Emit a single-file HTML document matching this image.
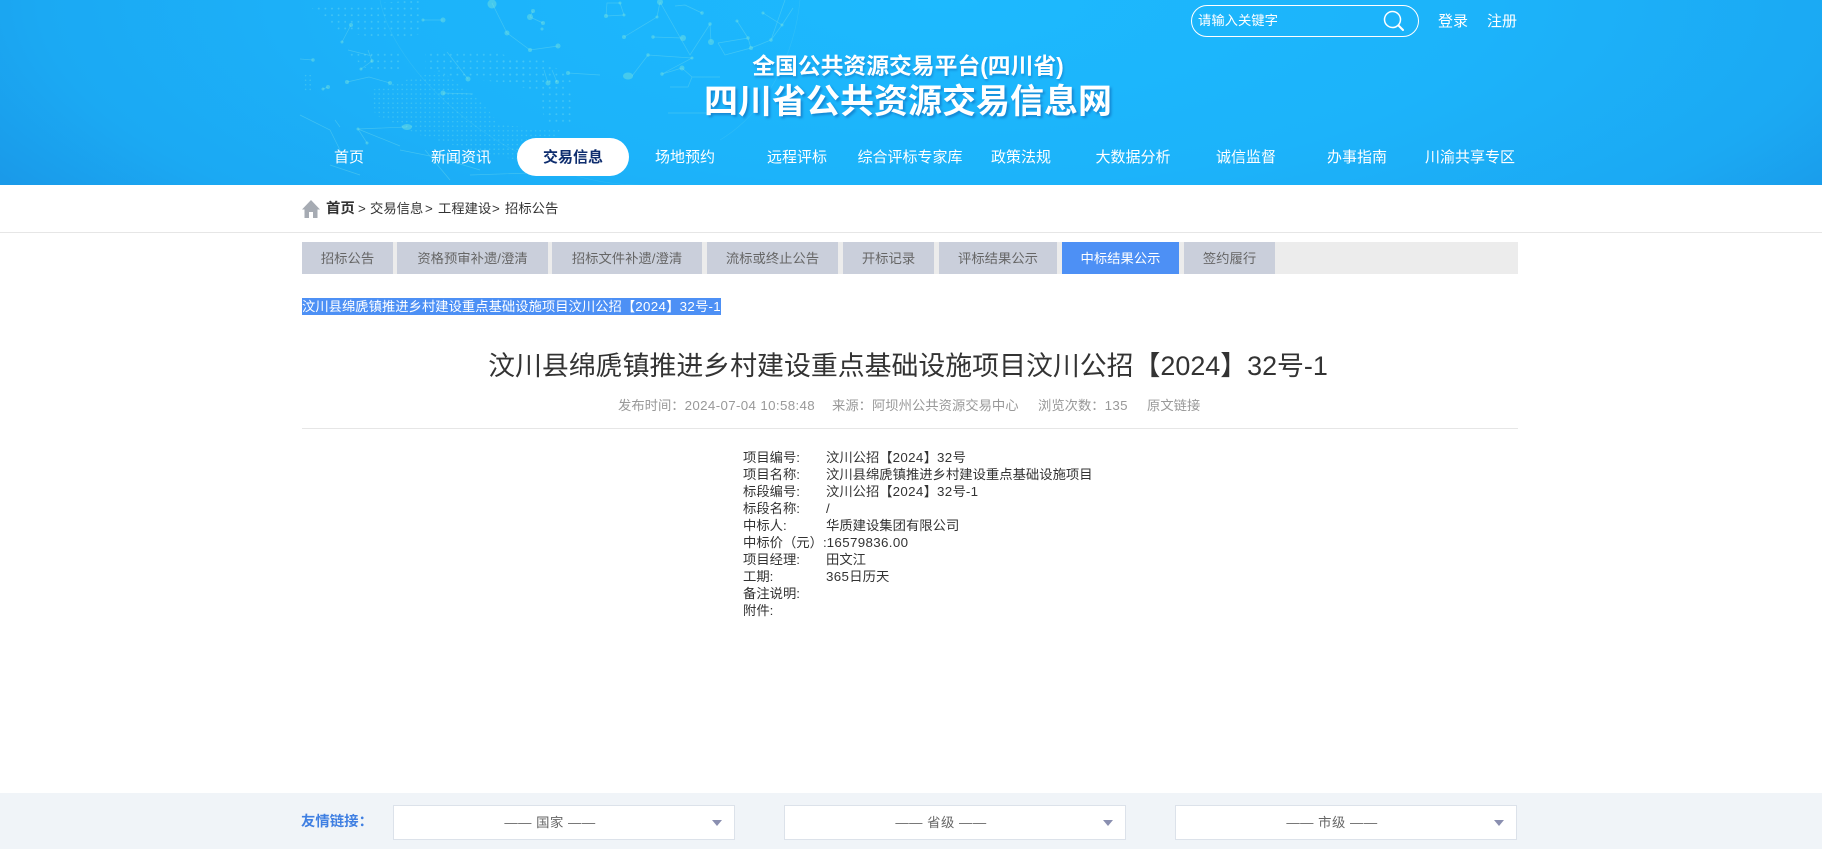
<!DOCTYPE html>
<html lang="zh-CN">
<head>
<meta charset="utf-8">
<title>四川省公共资源交易信息网</title>
<style>
*{margin:0;padding:0;box-sizing:border-box}
html,body{width:1822px;height:849px;overflow:hidden;background:#fff}
body{position:relative;font-family:"Liberation Sans","Noto Sans CJK SC",sans-serif;color:#333}
.a{position:absolute;white-space:nowrap}
.n{letter-spacing:.35px}
.hd{position:absolute;left:0;top:0;width:1822px;height:185px;overflow:hidden;
background:radial-gradient(ellipse 1500px 500px at 940px 0px,#1db9fe 0%,#1cb3fa 37%,#1ba9f3 60%,#1a9ae9 72%,#1a96e6 100%)}
.nav{position:absolute;top:139px;height:38px;line-height:38px;width:160px;text-align:center;font-size:15px;color:#fff}
.t1{left:600px;width:622px;text-align:center;color:#fff;font-weight:bold}
.tab{position:absolute;top:242px;height:32px;line-height:32px;padding-top:1px;background:#cacfdb;color:#666;font-size:13.33px;text-align:center}
.r{position:absolute;font-size:13.33px;line-height:17px;height:17px;color:#333;white-space:nowrap}
.bc{position:absolute;top:199px;height:20px;line-height:20px;font-size:13.33px;color:#333;white-space:nowrap}
.m{position:absolute;top:396px;height:20px;line-height:20px;font-size:13.33px;color:#999;white-space:nowrap}
.sel{position:absolute;top:805px;width:342px;height:35px;background:#fff;border:1px solid #dce2ea;text-align:center;font-size:13.33px;line-height:33px;color:#666;padding-right:28px;letter-spacing:.5px}
.sel i{position:absolute;right:12px;top:14px;width:0;height:0;border-left:5px solid transparent;border-right:5px solid transparent;border-top:6px solid #8a8fb0}
</style>
</head>
<body>
<div class="hd">
<svg class="a" style="left:0;top:0" width="1822" height="185" viewBox="0 0 1822 185">
<defs>
<pattern id="d7" width="6.6" height="6.6" patternUnits="userSpaceOnUse"><circle cx="2" cy="2" r="0.9" fill="#9cf0ea"/></pattern>
<pattern id="d5" width="4.6" height="4.6" patternUnits="userSpaceOnUse"><circle cx="2" cy="2" r="0.75" fill="#8fece6"/></pattern>
</defs>
<g opacity=".3">
<polygon fill="url(#d7)" points="312,8 420,0 420,34 395,40 340,32"/>
<polygon fill="url(#d7)" points="345,50 400,50 400,70 365,68"/>
<polygon fill="url(#d7)" points="425,50 490,50 525,62 525,85 480,80 425,72"/>
<polygon fill="url(#d7)" points="500,58 540,58 575,80 560,95 510,85"/>
<polygon fill="url(#d5)" points="372,90 440,70 480,100 500,125 560,130 540,165 470,150 420,135 375,115"/>
<polygon fill="url(#d7)" points="540,90 575,90 570,125 545,125"/>
<polygon fill="url(#d5)" points="302,75 312,75 312,92 302,92"/>
</g>
<g fill="none" stroke="#8fe8e6" stroke-width=".7" opacity=".32">
<path d="M492 3L507 33L530 50L558 46"/>
<path d="M530 17L543 23M533 11L530 17M423 20L443 20"/>
<path d="M351 25L342 42M300 59L313 60M372 61L361 69M368 50L372 61M348 50L372 56"/>
<path d="M347 82L369 77L390 83M328 87L323 89"/>
<path d="M407 127L358 129L367 143M340 127L335 120M358 129L400 146"/>
<path d="M447 52L468 79M443 93L473 94M568 73L600 75M632 76L648 55L692 58L662 74L682 68L692 77"/>
<path d="M544 70L548 83M552 70L557 82"/>
<path d="M660 2L657 17L624 37M606 16L624 15L620 3L607 3L606 16"/>
<path d="M653 37L683 38M660 2L690 55L710 24L711 42"/>
<path d="M675 6L685 5L702 13M718 43L725 55L751 48L771 40L782 25L763 13M718 43L748 38L751 48M737 21L748 38"/>
<path d="M670 87L688 87L692 77M692 77L720 77M668 113L720 113M793 8L782 25M785 0L771 40"/>
<path d="M300 115L330 130L345 160M400 150L440 158L480 170M330 165L360 175"/>
<path d="M380 0C395 80 520 185 640 185" stroke-width=".6" opacity=".5"/>
<path d="M800 0C795 50 770 110 720 140" stroke-width=".6" opacity=".5"/>
<path d="M470 175L560 172M425 150L450 180"/>
</g>
<g fill="#7fe8dc" opacity=".42">
<circle cx="492" cy="4" r="4.5"/><circle cx="507" cy="33" r="2.5"/><circle cx="530" cy="50" r="2"/><circle cx="558" cy="46" r="2.5"/>
<circle cx="530" cy="17" r="3"/><circle cx="533" cy="11" r="2"/><circle cx="543" cy="23" r="2"/><circle cx="542" cy="29" r="1.5"/>
<circle cx="443" cy="20" r="2.5"/><circle cx="423" cy="20" r="1.5"/><circle cx="351" cy="25" r="2"/><circle cx="342" cy="42" r="1.5"/>
<circle cx="313" cy="60" r="1.7"/><circle cx="372" cy="61" r="1.7"/><circle cx="361" cy="69" r="1.5"/><circle cx="347" cy="82" r="2"/><circle cx="390" cy="83" r="2"/>
<circle cx="328" cy="87" r="2"/><circle cx="323" cy="89" r="1.5"/><ellipse cx="407" cy="127" rx="5" ry="3"/><circle cx="358" cy="129" r="1.5"/><circle cx="367" cy="143" r="1.5"/>
<circle cx="468" cy="79" r="2.5"/><circle cx="443" cy="93" r="2.5"/><circle cx="568" cy="73" r="2"/><circle cx="548" cy="83" r="2.5"/><circle cx="557" cy="82" r="2"/>
<circle cx="660" cy="2" r="3"/><circle cx="657" cy="17" r="1.5"/><circle cx="624" cy="37" r="2"/><circle cx="606" cy="16" r="2"/><circle cx="624" cy="15" r="1.5"/><circle cx="620" cy="3" r="1.5"/>
<circle cx="683" cy="38" r="3"/><circle cx="653" cy="37" r="1.7"/><circle cx="710" cy="24" r="1.7"/><circle cx="711" cy="42" r="3"/>
<ellipse cx="628" cy="76" rx="5" ry="3.5"/><circle cx="648" cy="55" r="1.7"/><circle cx="662" cy="74" r="1.7"/><circle cx="682" cy="68" r="2.5"/><circle cx="692" cy="58" r="1.5"/>
<circle cx="751" cy="48" r="2"/><circle cx="771" cy="40" r="1.7"/><circle cx="763" cy="13" r="1.5"/><circle cx="737" cy="21" r="1.5"/><circle cx="748" cy="38" r="1.7"/><circle cx="702" cy="13" r="1.7"/><circle cx="782" cy="25" r="1.5"/>
</g>
</svg>
<div class="a t1" style="top:50px;height:32px;line-height:32px;font-size:22.8px;left:597px;text-shadow:1px 2px 2px rgba(15,110,190,.5)">全国公共资源交易平台(四川省)</div>
<div class="a t1" style="top:79px;height:46px;line-height:46px;font-size:34px;left:597px;text-shadow:2px 2px 2px rgba(15,100,180,.55)">四川省公共资源交易信息网</div>

<div class="a" style="left:1191px;top:5px;width:228px;height:32px;border:1px solid #fff;border-radius:16px"></div>
<div class="a" style="left:1198px;top:12px;height:18px;line-height:18px;font-size:13.33px;color:#fff">请输入关键字</div>
<svg class="a" style="left:1382px;top:9px" width="24" height="24" viewBox="0 0 24 24" fill="none" stroke="#fff"><circle cx="10.5" cy="10.5" r="8" stroke-width="1.5"/><path d="M16.5 16.5L21 21" stroke-width="2" stroke-linecap="round"/></svg>
<div class="a" style="left:1438px;top:11px;height:22px;line-height:22px;font-size:15px;color:#fff">登录</div>
<div class="a" style="left:1487px;top:11px;height:22px;line-height:22px;font-size:15px;color:#fff">注册</div>

<div class="a" style="left:517px;top:138px;width:112px;height:38px;border-radius:19px;background:#fff"></div>
<div class="nav" style="left:269px">首页</div>
<div class="nav" style="left:381px">新闻资讯</div>
<div class="nav" style="left:493px;color:#0e2d6e;font-weight:bold">交易信息</div>
<div class="nav" style="left:605px">场地预约</div>
<div class="nav" style="left:717px">远程评标</div>
<div class="nav" style="left:830px">综合评标专家库</div>
<div class="nav" style="left:941px">政策法规</div>
<div class="nav" style="left:1053px">大数据分析</div>
<div class="nav" style="left:1166px">诚信监督</div>
<div class="nav" style="left:1277px">办事指南</div>
<div class="nav" style="left:1390px">川渝共享专区</div>
</div>

<svg class="a" style="left:302px;top:200px" width="18" height="18" viewBox="0 0 18 18"><path d="M9 0L18 9.5H15.5V18H11V12H7V18H2.5V9.5H0Z" fill="#a6abb3"/></svg>
<div class="bc" style="left:326px;font-size:14.4px;font-weight:bold">首页</div>
<div class="bc" style="left:358px">&gt;</div>
<div class="bc" style="left:370px">交易信息</div>
<div class="bc" style="left:425px">&gt;</div>
<div class="bc" style="left:438px">工程建设</div>
<div class="bc" style="left:492px">&gt;</div>
<div class="bc" style="left:505px">招标公告</div>
<div class="a" style="left:0;top:232px;width:1822px;height:1px;background:#e6e6e6"></div>

<div class="a" style="left:302px;top:242px;width:1216px;height:32px;background:#ececec"></div>
<div class="tab" style="left:302px;width:91px">招标公告</div>
<div class="tab" style="left:397px;width:151px">资格预审补遗/澄清</div>
<div class="tab" style="left:552px;width:150px">招标文件补遗/澄清</div>
<div class="tab" style="left:707px;width:131px">流标或终止公告</div>
<div class="tab" style="left:843px;width:91px">开标记录</div>
<div class="tab" style="left:939px;width:118px">评标结果公示</div>
<div class="tab" style="left:1062px;width:117px;background:#4d90f5;color:#fff">中标结果公示</div>
<div class="tab" style="left:1184px;width:91px">签约履行</div>

<div class="a" style="left:302px;top:298px;width:419px;height:17px;line-height:17px;background:#4d90f5;color:#fff;font-size:13.33px">汶川县绵虒镇推进乡村建设重点基础设施项目汶川公招【<span class="n">2024</span>】<span class="n">32</span>号<span class="n">-1</span></div>

<div class="a" style="left:300px;top:346px;width:1216px;height:40px;line-height:40px;text-align:center;font-size:26.9px;color:#333">汶川县绵虒镇推进乡村建设重点基础设施项目汶川公招【2024】32号-1</div>

<div class="m" style="left:618px">发布时间：<span class="n">2024-07-04 10:58:48</span></div>
<div class="m" style="left:832px">来源：阿坝州公共资源交易中心</div>
<div class="m" style="left:1038px">浏览次数：<span class="n">135</span></div>
<div class="m" style="left:1147px">原文链接</div>
<div class="a" style="left:302px;top:428px;width:1216px;height:1px;background:#e6e6e6"></div>

<div class="r" style="left:743px;top:449px">项目编号:</div><div class="r" style="left:826px;top:449px">汶川公招【<span class="n">2024</span>】<span class="n">32</span>号</div>
<div class="r" style="left:743px;top:466px">项目名称:</div><div class="r" style="left:826px;top:466px">汶川县绵虒镇推进乡村建设重点基础设施项目</div>
<div class="r" style="left:743px;top:483px">标段编号:</div><div class="r" style="left:826px;top:483px">汶川公招【<span class="n">2024</span>】<span class="n">32</span>号<span class="n">-1</span></div>
<div class="r" style="left:743px;top:500px">标段名称:</div><div class="r" style="left:826px;top:500px">/</div>
<div class="r" style="left:743px;top:517px">中标人:</div><div class="r" style="left:826px;top:517px">华质建设集团有限公司</div>
<div class="r" style="left:743px;top:534px">中标价（元）:<span class="n">16579836.00</span></div>
<div class="r" style="left:743px;top:551px">项目经理:</div><div class="r" style="left:826px;top:551px">田文江</div>
<div class="r" style="left:743px;top:568px">工期:</div><div class="r" style="left:826px;top:568px"><span class="n">365</span>日历天</div>
<div class="r" style="left:743px;top:585px">备注说明:</div>
<div class="r" style="left:743px;top:602px">附件:</div>

<div class="a" style="left:0;top:793px;width:1822px;height:56px;background:#f0f4f8"></div>
<div class="a" style="left:301px;top:812px;height:20px;line-height:20px;font-size:14.4px;font-weight:bold;color:#3f7fe2">友情链接：</div>
<div class="sel" style="left:393px">—— 国家 ——<i></i></div>
<div class="sel" style="left:784px">—— 省级 ——<i></i></div>
<div class="sel" style="left:1175px">—— 市级 ——<i></i></div>
</body>
</html>
